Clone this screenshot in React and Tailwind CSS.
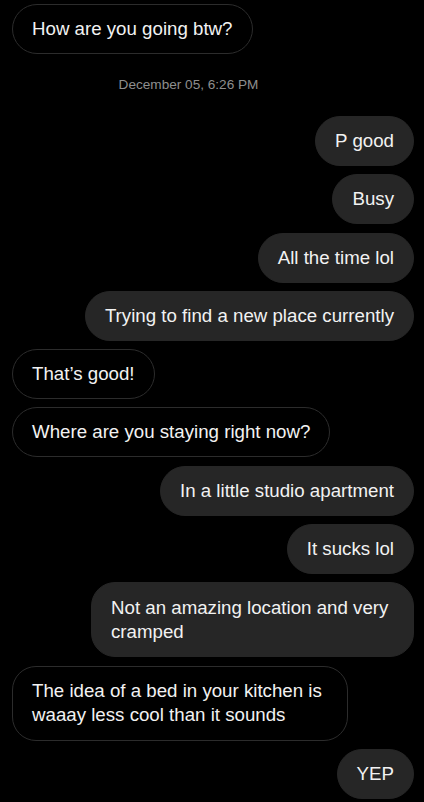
export default function App() {
  const msgs = [
    { t: "P good", me: true },
    { t: "Busy", me: true },
    { t: "All the time lol", me: true },
    { t: "Trying to find a new place currently", me: true },
    { t: "That’s good!", me: false },
    { t: "Where are you staying right now?", me: false },
    { t: "In a little studio apartment", me: true },
    { t: "It sucks lol", me: true },
    { t: "Not an amazing location and very cramped", me: true, multi: true, w: "w-[323px]" },
    { t: "The idea of a bed in your kitchen is waaay less cool than it sounds", me: false, multi: true, w: "w-[336px]" },
    { t: "YEP", me: true },
  ];
  return (
    <div className="w-[424px] h-[802px] overflow-hidden bg-black text-[#f2f2f2] pl-3 pr-[10px] pt-1" style={{ fontFamily: '"Liberation Sans", Arial, sans-serif' }}>
      <div className="flex">
        <div className="border border-[#2c2c2c] rounded-full px-[19px] py-[12px] text-[18.7px] leading-[24px]">How are you going btw?</div>
      </div>
      <div className="text-center text-[13.6px] leading-[16px] text-[#8e8e8e] mt-[23px] mb-[23px] mr-[49px]">December 05, 6:26 PM</div>
      <div className="flex flex-col gap-[8.3px]">
        {msgs.map((m, i) => (
          <div key={i} className={m.me ? "flex justify-end" : "flex justify-start"}>
            <div
              className={
                (m.me ? "bg-[#262626] border border-[#262626] " : "border border-[#2c2c2c] ") +
                (m.multi ? "rounded-[24px] py-[12.5px] " + m.w : "rounded-full py-[12px]") +
                " px-[19px] text-[18.7px] leading-[24px]"
              }
            >
              {m.t}
            </div>
          </div>
        ))}
      </div>
    </div>
  );
}
